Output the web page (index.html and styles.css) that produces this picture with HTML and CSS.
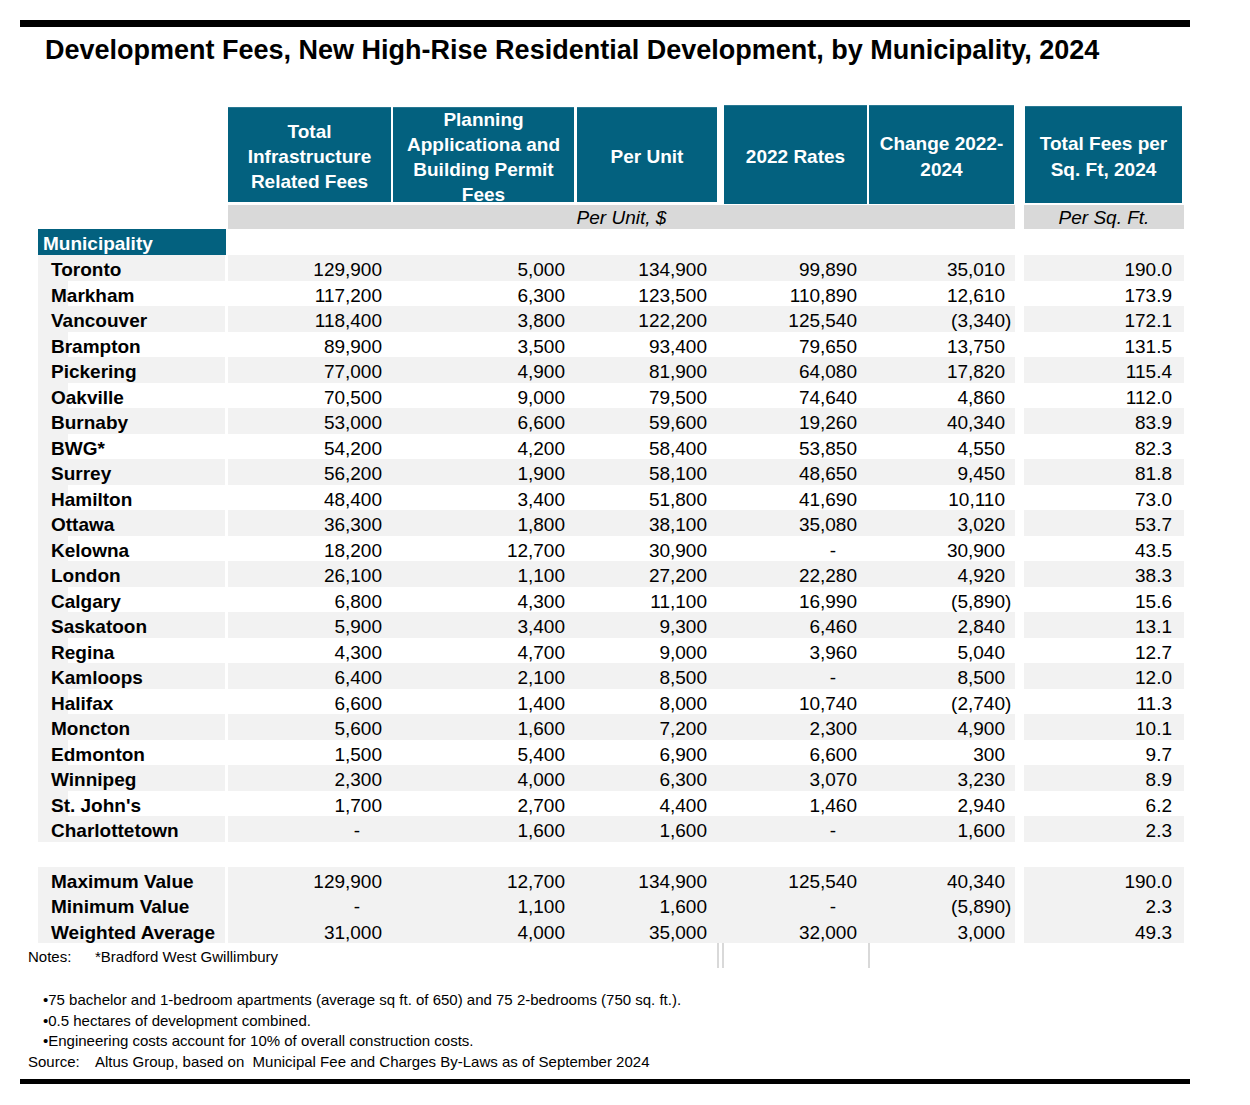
FILE: index.html
```html
<!DOCTYPE html>
<html>
<head>
<meta charset="utf-8">
<title>Development Fees</title>
<link rel="stylesheet" href="styles.css">
</head>
<body>
<div class="page">
  <div class="rule rule-top"></div>
  <h1 class="title">Development Fees, New High-Rise Residential Development, by Municipality, 2024</h1>

  <div class="table">
    <div class="grid hdr">
      <div class="h h1">Total<br>Infrastructure<br>Related Fees</div>
      <div class="h h2 top">Planning<br>Applicationa and<br>Building Permit<br>Fees</div>
      <div class="h h3">Per Unit</div>
      <div class="h h4">2022 Rates</div>
      <div class="h h5">Change 2022-<br>2024</div>
      <div class="h h6">Total Fees per<br>Sq. Ft, 2024</div>
    </div>
    <div class="grid sub">
      <div class="sub-main">Per Unit, $</div>
      <div class="sub-sq">Per Sq. Ft.</div>
    </div>
    <div class="grid muni-row">
      <div class="muni">Municipality</div>
    </div>

    <div class="grid row odd"><div class="nm">Toronto</div><div class="c1">129,900</div><div class="c2">5,000</div><div class="c3">134,900</div><div class="c4">99,890</div><div class="c5">35,010</div><div class="c6">190.0</div></div>
    <div class="grid row even"><div class="nm">Markham</div><div class="c1">117,200</div><div class="c2">6,300</div><div class="c3">123,500</div><div class="c4">110,890</div><div class="c5">12,610</div><div class="c6">173.9</div></div>
    <div class="grid row odd"><div class="nm">Vancouver</div><div class="c1">118,400</div><div class="c2">3,800</div><div class="c3">122,200</div><div class="c4">125,540</div><div class="c5">(3,340<span class="rp">)</span></div><div class="c6">172.1</div></div>
    <div class="grid row even"><div class="nm">Brampton</div><div class="c1">89,900</div><div class="c2">3,500</div><div class="c3">93,400</div><div class="c4">79,650</div><div class="c5">13,750</div><div class="c6">131.5</div></div>
    <div class="grid row odd"><div class="nm">Pickering</div><div class="c1">77,000</div><div class="c2">4,900</div><div class="c3">81,900</div><div class="c4">64,080</div><div class="c5">17,820</div><div class="c6">115.4</div></div>
    <div class="grid row even"><div class="nm">Oakville</div><div class="c1">70,500</div><div class="c2">9,000</div><div class="c3">79,500</div><div class="c4">74,640</div><div class="c5">4,860</div><div class="c6">112.0</div></div>
    <div class="grid row odd"><div class="nm">Burnaby</div><div class="c1">53,000</div><div class="c2">6,600</div><div class="c3">59,600</div><div class="c4">19,260</div><div class="c5">40,340</div><div class="c6">83.9</div></div>
    <div class="grid row even"><div class="nm">BWG*</div><div class="c1">54,200</div><div class="c2">4,200</div><div class="c3">58,400</div><div class="c4">53,850</div><div class="c5">4,550</div><div class="c6">82.3</div></div>
    <div class="grid row odd"><div class="nm">Surrey</div><div class="c1">56,200</div><div class="c2">1,900</div><div class="c3">58,100</div><div class="c4">48,650</div><div class="c5">9,450</div><div class="c6">81.8</div></div>
    <div class="grid row even"><div class="nm">Hamilton</div><div class="c1">48,400</div><div class="c2">3,400</div><div class="c3">51,800</div><div class="c4">41,690</div><div class="c5">10,110</div><div class="c6">73.0</div></div>
    <div class="grid row odd"><div class="nm">Ottawa</div><div class="c1">36,300</div><div class="c2">1,800</div><div class="c3">38,100</div><div class="c4">35,080</div><div class="c5">3,020</div><div class="c6">53.7</div></div>
    <div class="grid row even"><div class="nm">Kelowna</div><div class="c1">18,200</div><div class="c2">12,700</div><div class="c3">30,900</div><div class="c4"><span class="dash">-</span></div><div class="c5">30,900</div><div class="c6">43.5</div></div>
    <div class="grid row odd"><div class="nm">London</div><div class="c1">26,100</div><div class="c2">1,100</div><div class="c3">27,200</div><div class="c4">22,280</div><div class="c5">4,920</div><div class="c6">38.3</div></div>
    <div class="grid row even"><div class="nm">Calgary</div><div class="c1">6,800</div><div class="c2">4,300</div><div class="c3">11,100</div><div class="c4">16,990</div><div class="c5">(5,890<span class="rp">)</span></div><div class="c6">15.6</div></div>
    <div class="grid row odd"><div class="nm">Saskatoon</div><div class="c1">5,900</div><div class="c2">3,400</div><div class="c3">9,300</div><div class="c4">6,460</div><div class="c5">2,840</div><div class="c6">13.1</div></div>
    <div class="grid row even"><div class="nm">Regina</div><div class="c1">4,300</div><div class="c2">4,700</div><div class="c3">9,000</div><div class="c4">3,960</div><div class="c5">5,040</div><div class="c6">12.7</div></div>
    <div class="grid row odd"><div class="nm">Kamloops</div><div class="c1">6,400</div><div class="c2">2,100</div><div class="c3">8,500</div><div class="c4"><span class="dash">-</span></div><div class="c5">8,500</div><div class="c6">12.0</div></div>
    <div class="grid row even"><div class="nm">Halifax</div><div class="c1">6,600</div><div class="c2">1,400</div><div class="c3">8,000</div><div class="c4">10,740</div><div class="c5">(2,740<span class="rp">)</span></div><div class="c6">11.3</div></div>
    <div class="grid row odd"><div class="nm">Moncton</div><div class="c1">5,600</div><div class="c2">1,600</div><div class="c3">7,200</div><div class="c4">2,300</div><div class="c5">4,900</div><div class="c6">10.1</div></div>
    <div class="grid row even"><div class="nm">Edmonton</div><div class="c1">1,500</div><div class="c2">5,400</div><div class="c3">6,900</div><div class="c4">6,600</div><div class="c5">300</div><div class="c6">9.7</div></div>
    <div class="grid row odd"><div class="nm">Winnipeg</div><div class="c1">2,300</div><div class="c2">4,000</div><div class="c3">6,300</div><div class="c4">3,070</div><div class="c5">3,230</div><div class="c6">8.9</div></div>
    <div class="grid row even"><div class="nm">St. John's</div><div class="c1">1,700</div><div class="c2">2,700</div><div class="c3">4,400</div><div class="c4">1,460</div><div class="c5">2,940</div><div class="c6">6.2</div></div>
    <div class="grid row odd"><div class="nm">Charlottetown</div><div class="c1"><span class="dash">-</span></div><div class="c2">1,600</div><div class="c3">1,600</div><div class="c4"><span class="dash">-</span></div><div class="c5">1,600</div><div class="c6">2.3</div></div>

    <div class="blank"></div>

    <div class="grid row sum"><div class="nm">Maximum Value</div><div class="c1">129,900</div><div class="c2">12,700</div><div class="c3">134,900</div><div class="c4">125,540</div><div class="c5">40,340</div><div class="c6">190.0</div></div>
    <div class="grid row sum"><div class="nm">Minimum Value</div><div class="c1"><span class="dash">-</span></div><div class="c2">1,100</div><div class="c3">1,600</div><div class="c4"><span class="dash">-</span></div><div class="c5">(5,890<span class="rp">)</span></div><div class="c6">2.3</div></div>
    <div class="grid row sum"><div class="nm">Weighted Average</div><div class="c1">31,000</div><div class="c2">4,000</div><div class="c3">35,000</div><div class="c4">32,000</div><div class="c5">3,000</div><div class="c6">49.3</div></div>

    <div class="guide g1"></div>
    <div class="guide g2"></div>
    <div class="guide g3"></div>
  </div>

  <div class="notes">
    <div class="nline"><span class="lbl">Notes:</span>*Bradford West Gwillimbury</div>
    <div class="nline gapline">&nbsp;</div>
    <div class="nline bullet">•75 bachelor and 1-bedroom apartments (average sq ft. of 650) and 75 2-bedrooms (750 sq. ft.).</div>
    <div class="nline bullet">•0.5 hectares of development combined.</div>
    <div class="nline bullet">•Engineering costs account for 10% of overall construction costs.</div>
    <div class="nline"><span class="lbl">Source:</span>Altus Group, based on&nbsp; Municipal Fee and Charges By-Laws as of September 2024</div>
  </div>
  <div class="rule rule-bottom"></div>
</div>
</body>
</html>
```

FILE: styles.css
```css
* { box-sizing: border-box; }

html, body {
  margin: 0;
  padding: 0;
  background: #ffffff;
}

body {
  font-family: "Liberation Sans", Arial, sans-serif;
  color: #000;
}

.page {
  width: 1170px;
  margin-left: 20px;
}

.rule {
  background: #000;
}

.rule-top {
  margin-top: 20px;
  height: 7px;
}

.title {
  margin: 8px 0 0 25px;
  font-size: 27px;
  line-height: 30px;
  font-weight: bold;
  white-space: nowrap;
}

.table {
  position: relative;
  margin-top: 40px;
  margin-left: 18px;
  width: 1146px;
}

.grid {
  display: grid;
  grid-template-columns: 187px 3px 164px 183px 145px 148px 147px 9px 160px;
}

/* header */
.hdr {
  height: 100px;
}

.h {
  background: #03617f;
  color: #fff;
  font-weight: bold;
  font-size: 19px;
  line-height: 25px;
  text-align: center;
  display: flex;
  flex-direction: column;
  justify-content: center;
  align-items: center;
  overflow: hidden;
  padding-top: 4px;
  box-shadow: inset 0 1px 0 rgba(255,255,255,0.15);
}

.h.top {
  justify-content: flex-start;
  padding-top: 0;
}

.h1 { grid-column: 3; margin: 2px 1px 3px 0; }
.h2 { grid-column: 4; margin: 2px 1px 3px 1px; }
.h3 { grid-column: 5; margin: 2px 3px 3px 2px; }
.h4 { grid-column: 6; margin: 0 1px 1px 4px; }
.h5 { grid-column: 7; margin: 0 1px 1px 1px; line-height: 26px; }
.h6 { grid-column: 9; margin: 1px 2px 2px 1px; line-height: 26px; }

/* sub band */
.sub {
  height: 24px;
}

.sub-main,
.sub-sq {
  background: #d9d9d9;
  font-style: italic;
  font-size: 19px;
  line-height: 23px;
  padding-top: 1px;
  text-align: center;
}

.sub-main { grid-column: 3 / 8; }
.sub-sq { grid-column: 9; }

/* municipality label */
.muni-row {
  height: 26px;
}

.muni {
  grid-column: 1;
  margin-right: -1px;
  background: #03617f;
  color: #fff;
  font-weight: bold;
  font-size: 19px;
  line-height: 26px;
  padding: 2px 0 0 5px;
  overflow: hidden;
}

/* body rows */
.row {
  height: 25.5px;
  font-size: 19px;
}

.row > div {
  line-height: 21.5px;
  padding-top: 4px;
  white-space: nowrap;
}

.nm {
  grid-column: 1;
  font-weight: bold;
  padding-left: 13px;
}

.c1 { grid-column: 3; text-align: right; padding-right: 10px; }
.c2 { grid-column: 4; text-align: right; padding-right: 10px; }
.c3 { grid-column: 5; text-align: right; padding-right: 13px; }
.c4 { grid-column: 6; text-align: right; padding-right: 11px; }
.c5 { grid-column: 7; text-align: right; padding-right: 10px; }
.c6 { grid-column: 9; text-align: right; padding-right: 12px; }

.c1 .dash { padding-right: 22px; }
.c4 .dash { padding-right: 21px; }

.rp {
  margin-right: -6.3px;
}

.odd > div,
.sum > div {
  background: #f2f2f2;
}

.even > .nm {
  background: linear-gradient(to right, #f2f2f2 30px, #ffffff 30px);
}

.blank {
  height: 25px;
}

/* faint column guides below table */
.guide {
  position: absolute;
  top: 100%;
  width: 2px;
  height: 25px;
  background: #d9d9d9;
}

.g1 { left: 679px; }
.g2 { left: 684px; }
.g3 { left: 830px; }

/* notes */
.notes {
  margin-top: 4px;
  padding-left: 8px;
  font-size: 15px;
  line-height: 20.6px;
}

.nline {
  white-space: nowrap;
}

.gapline {
  height: 22.4px;
}

.lbl {
  display: inline-block;
  width: 67px;
}

.bullet {
  padding-left: 15px;
}

.rule-bottom {
  margin-top: 7px;
  height: 5px;
}
```
